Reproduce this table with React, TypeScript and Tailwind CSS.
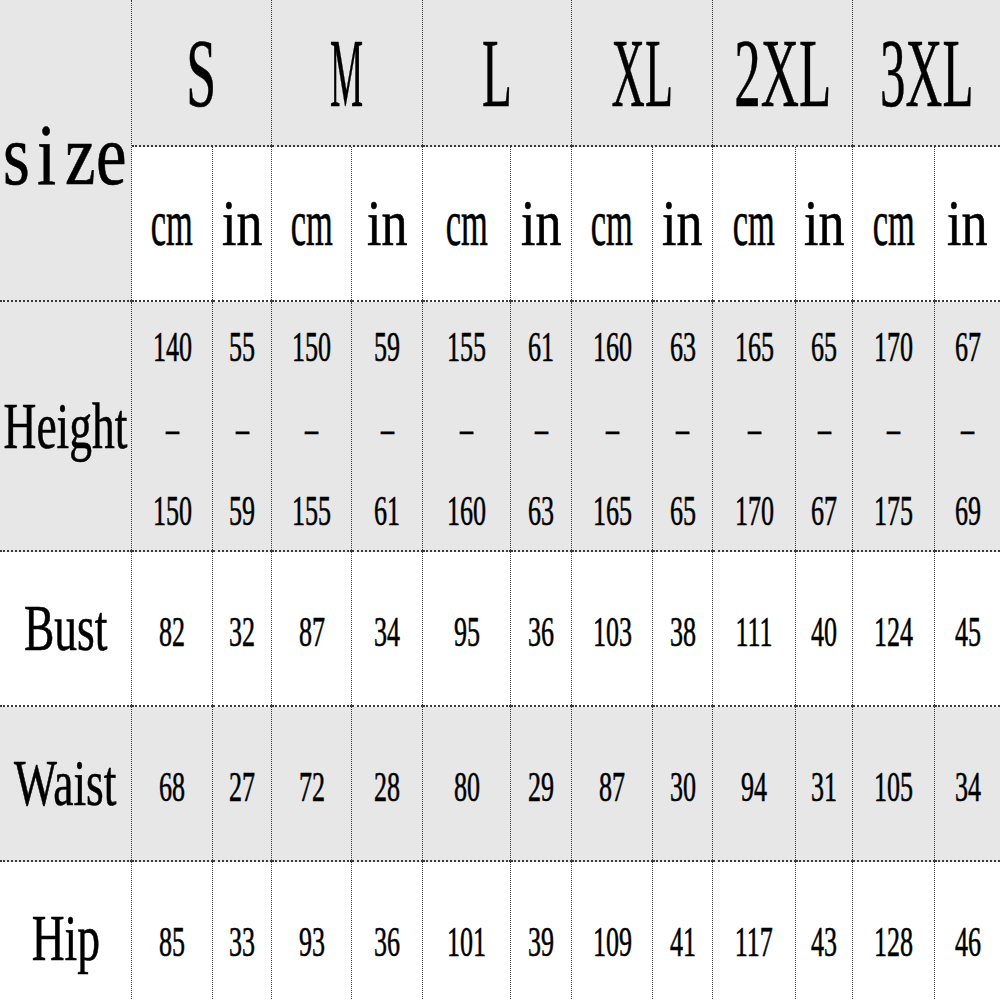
import React from 'react';

const serif = { fontFamily: '"Liberation Serif", "Times New Roman", serif' };

// header sizes, each with its own horizontal squeeze
const sizes = [
  { label: 'S', scale: 'scale-x-[0.55]' },
  { label: 'M', scale: 'scale-x-[0.38]' },
  { label: 'L', scale: 'scale-x-[0.5]' },
  { label: 'XL', scale: 'scale-x-[0.47]' },
  { label: '2XL', scale: 'scale-x-[0.54]' },
  { label: '3XL', scale: 'scale-x-[0.52]' },
];

const heightRanges: [number, number][] = [
  [140, 150], [55, 59], [150, 155], [59, 61], [155, 160], [61, 63],
  [160, 165], [63, 65], [165, 170], [65, 67], [170, 175], [67, 69],
];

const rows = [
  { label: 'Bust', gray: false, values: [82, 32, 87, 34, 95, 36, 103, 38, 111, 40, 124, 45] },
  { label: 'Waist', gray: true, values: [68, 27, 72, 28, 80, 29, 87, 30, 94, 31, 105, 34] },
  { label: 'Hip', gray: false, values: [85, 33, 93, 36, 101, 39, 109, 41, 117, 43, 128, 46] },
];

const line = 'border-dotted border-[#3a3a3a]';

const Cell: React.FC<{ last?: boolean; gray?: boolean; className?: string; children?: React.ReactNode }> = ({
  last,
  gray,
  className = '',
  children,
}) => (
  <div
    className={`${line} border-b-2 ${last ? '' : 'border-r'} ${gray ? 'bg-[#e7e7e7]' : 'bg-white'} flex items-center justify-center overflow-visible whitespace-nowrap ${className}`}
  >
    {children}
  </div>
);

const Num: React.FC<{ v: React.ReactNode }> = ({ v }) => (
  <span className="inline-block text-[42px] leading-none scale-x-[0.62] text-black pt-[6px]">{v}</span>
);

const Label: React.FC<{ text: string }> = ({ text }) => (
  <span className="inline-block text-[65px] leading-none scale-x-[0.7] text-black">{text}</span>
);

export default function App() {
  return (
    <div
      className="w-[1000px] h-[1000px] overflow-hidden bg-white [-webkit-text-stroke:0.6px_#000]"
      style={serif}
    >
      <div className="grid grid-cols-[132px_81px_59px_80px_71px_88px_61px_81px_60px_83px_57px_82px_65px] grid-rows-[147px_155px_250px_155px_155px_155px]">
        {/* size corner */}
        <Cell gray className="row-span-2 justify-start">
          <span className="flex text-[86px] leading-none text-black pt-[10px]">
            {'size'.split('').map((ch, i) => (
              <span key={i} className="inline-block w-[31px] text-center scale-x-[0.8]">
                {ch}
              </span>
            ))}
          </span>
        </Cell>

        {/* size letters */}
        {sizes.map((s, i) => (
          <Cell key={s.label} gray last={i === sizes.length - 1} className="col-span-2">
            <span className={`inline-block text-[98px] leading-none text-black ${s.scale}`}>{s.label}</span>
          </Cell>
        ))}

        {/* units */}
        {sizes.map((s, i) => (
          <React.Fragment key={`u-${s.label}`}>
            <Cell>
              <span className="inline-block text-[65px] leading-none scale-x-[0.53] text-black">cm</span>
            </Cell>
            <Cell last={i === sizes.length - 1}>
              <span className="inline-block text-[65px] leading-none scale-x-[0.8] text-black">in</span>
            </Cell>
          </React.Fragment>
        ))}

        {/* height */}
        <Cell gray>
          <Label text="Height" />
        </Cell>
        {heightRanges.map(([a, b], i) => (
          <Cell key={`h-${i}`} gray last={i === heightRanges.length - 1} className="flex-col">
            <div className="h-[82px] flex items-center"><Num v={a} /></div>
            <div className="h-[82px] flex items-center"><Num v="–" /></div>
            <div className="h-[82px] flex items-center"><Num v={b} /></div>
          </Cell>
        ))}

        {/* bust / waist / hip */}
        {rows.map((r) => (
          <React.Fragment key={r.label}>
            <Cell gray={r.gray}>
              <Label text={r.label} />
            </Cell>
            {r.values.map((v, i) => (
              <Cell key={`${r.label}-${i}`} gray={r.gray} last={i === r.values.length - 1}>
                <Num v={v} />
              </Cell>
            ))}
          </React.Fragment>
        ))}
      </div>
    </div>
  );
}
